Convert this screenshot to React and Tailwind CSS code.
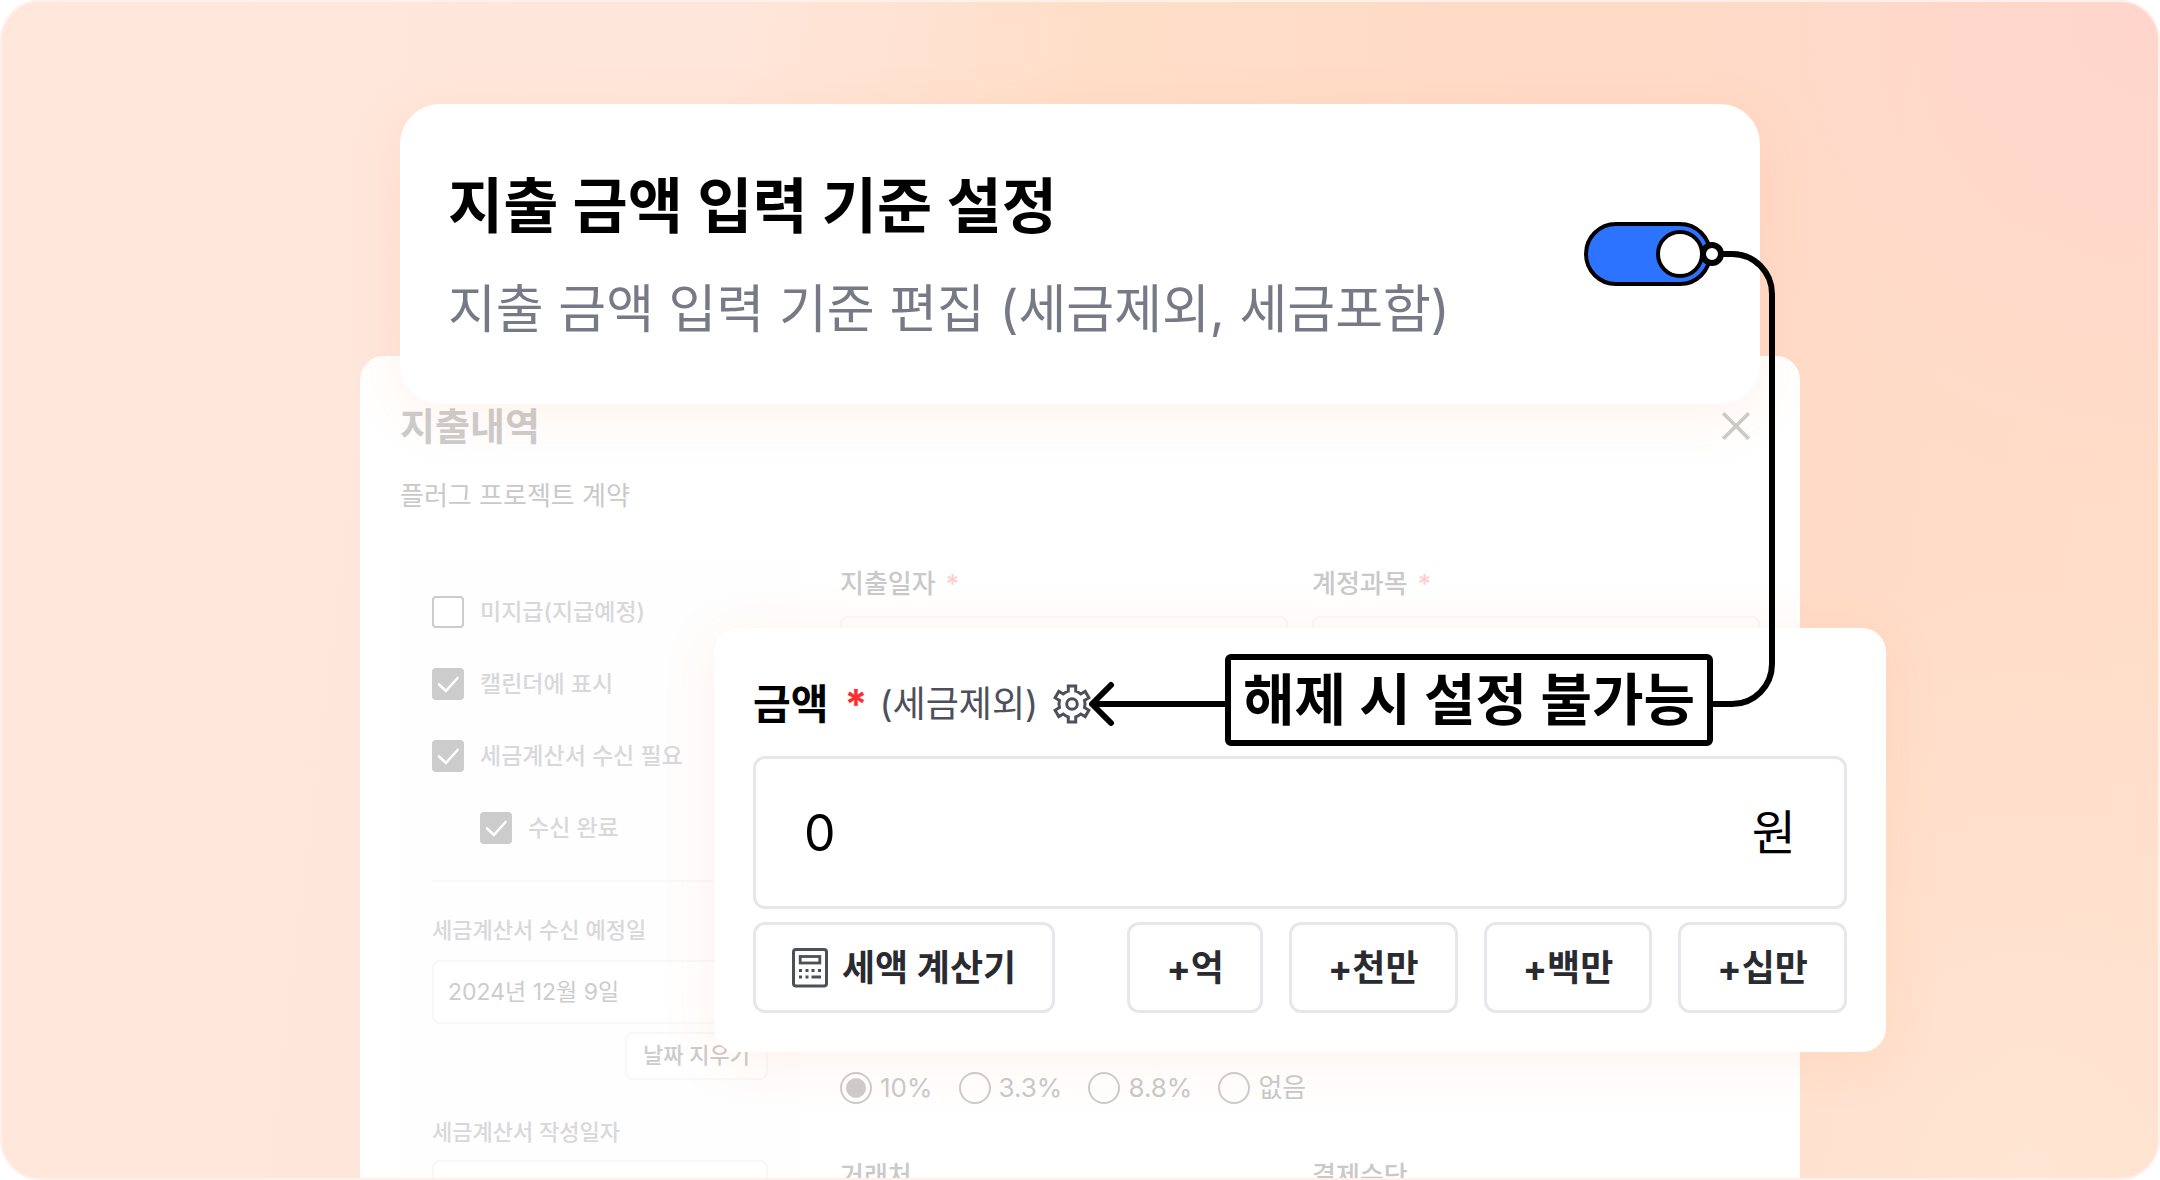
import React, { useState } from "react";

const sideChecks = [
  { id: "unpaid", label: "미지급(지급예정)", checked: false },
  { id: "calendar", label: "캘린더에 표시", checked: true },
  { id: "invoice", label: "세금계산서 수신 필요", checked: true },
  { id: "received", label: "수신 완료", checked: true, nested: true },
];

const taxRates = ["10%", "3.3%", "8.8%", "없음"];

const amountButtons = [
  { label: "+억", value: 100000000 },
  { label: "+천만", value: 10000000 },
  { label: "+백만", value: 1000000 },
  { label: "+십만", value: 100000 },
];

const CheckRow = ({ item }) => (
  <label
    htmlFor={item.id}
    className={`flex items-center gap-4 text-[23px] leading-8 font-medium text-[#d8d8da] ${
      item.nested ? "ml-12" : ""
    }`}
  >
    <span className="relative flex size-8">
      <input
        id={item.id}
        type="checkbox"
        defaultChecked={item.checked}
        className="peer size-8 appearance-none rounded border-2 border-[#cccccc] bg-white checked:bg-[#cccccc]"
      />
      <svg
        viewBox="0 0 32 32"
        fill="none"
        className="pointer-events-none absolute inset-0 hidden size-8 peer-checked:block"
      >
        <path
          d="M7 16.5 14 23 25.500 10"
          stroke="white"
          strokeWidth="2.6"
          strokeLinecap="round"
          strokeLinejoin="round"
        />
      </svg>
    </span>
    {item.label}
  </label>
);

const FieldLabel = ({ htmlFor, children, required }) => (
  <label
    htmlFor={htmlFor}
    className="flex gap-2.5 text-[26px] leading-9 font-medium text-[#c9c9c9]"
  >
    {children}
    {required && <span className="text-[#ffcccc]">*</span>}
  </label>
);

const GearIcon = () => (
  <svg viewBox="0 0 40 40" fill="none" className="size-10">
    <path
      d="M16.300 2H23.700V7.100A13.500 13.500 0 0 1 28.700 10L33.200 7.400 36.900 13.800 32.500 16.400A13.500 13.500 0 0 1 32.500 23.600L36.900 26.200 33.200 32.600 28.700 30A13.500 13.500 0 0 1 23.700 32.900V38H16.300V32.900A13.500 13.500 0 0 1 11.300 30L6.800 32.600 3.100 26.200 7.500 23.600A13.500 13.500 0 0 1 7.500 16.400L3.100 13.800 6.800 7.400 11.300 10A13.500 13.500 0 0 1 16.300 7.100Z"
      stroke="#4d505b"
      strokeWidth="3"
    />
    <circle cx="20" cy="20" r="5.300" stroke="#4d505b" strokeWidth="3" />
  </svg>
);

const CalculatorIcon = () => (
  <svg viewBox="0 0 36 40" fill="none" className="h-10 w-9">
    <rect x="1.500" y="1.500" width="33" height="36.500" rx="2.500" stroke="#4d505b" strokeWidth="3" />
    <rect x="8.200" y="8.500" width="19.600" height="6.500" stroke="#4d505b" strokeWidth="2.800" />
    <path
      d="M7 22.500h3M13.500 22.500h3M19.500 22.500h3M26 22.500h3M7 29h3M13.500 29h3M19.500 29H29"
      stroke="#4d505b"
      strokeWidth="3"
    />
  </svg>
);

const SettingCard = () => (
  <section className="relative z-10 mx-10 flex items-center justify-between rounded-[40px] bg-white pt-16 pr-12 pb-14 pl-12 shadow-[0_12px_56px_rgba(255,125,65,0.10)]">
    <div>
      <h1 className="text-[60px] leading-[76px] font-bold text-black">지출 금액 입력 기준 설정</h1>
      <p className="mt-7 text-[52px] leading-[76px] text-[#777a86]">
        지출 금액 입력 기준 편집 (세금제외, 세금포함)
      </p>
    </div>
    <button
      type="button"
      role="switch"
      aria-checked="true"
      aria-label="지출 금액 입력 기준 설정"
      className="mb-2 flex h-16 w-32 items-center justify-end rounded-full border-4 border-black bg-[#2c74ff] px-1"
    >
      <span className="size-12 rounded-full border-4 border-black bg-white" />
    </button>
  </section>
);

const ExpensePanel = () => (
  <section className="-mt-12 rounded-t-3xl bg-white px-10 pt-12">
    <div className="flex items-center justify-between pr-2">
      <h2 className="text-[38px] leading-11 font-bold text-[#cccccc]">지출내역</h2>
      <button type="button" aria-label="닫기">
        <svg viewBox="0 0 30 30" className="size-8" fill="none">
          <path d="M3 3 27 27M27 3 3 27" stroke="#cccccc" strokeWidth="3.500" />
        </svg>
      </button>
    </div>
    <p className="mt-7 text-[26px] leading-10 text-[#c9c9c9]">플러그 프로젝트 계약</p>

    <div className="mt-11 flex gap-10">
      <aside className="flex w-[400px] flex-col bg-[#fefefe] px-8 pt-9">
        <div className="flex flex-col gap-10 border-b-2 border-[#f8f8f9] pb-9">
          {sideChecks.map((item) => (
            <CheckRow key={item.id} item={item} />
          ))}
        </div>
        <label htmlFor="due" className="mt-8 text-[22px] leading-8 font-medium text-[#d8d8da]">
          세금계산서 수신 예정일
        </label>
        <input
          id="due"
          defaultValue="2024년 12월 9일"
          className="mt-3.5 h-16 rounded-lg border-2 border-[#f8f8f9] bg-white px-3.5 pb-1 text-[23px] text-[#cccccc]"
        />
        <button
          type="button"
          className="mt-2 h-12 self-end rounded-lg border-2 border-[#f8f8f9] bg-white px-4 pb-0.5 text-[22px] font-medium text-[#cccccc]"
        >
          날짜 지우기
        </button>
        <label htmlFor="written" className="mt-9 text-[22px] leading-8 font-medium text-[#d8d8da]">
          세금계산서 작성일자
        </label>
        <input
          id="written"
          className="mt-3 h-16 rounded-lg border-2 border-[#f8f8f9] bg-white px-3.5 text-[23px] text-[#cccccc]"
        />
      </aside>

      <div className="grid flex-1 grid-cols-2 content-start gap-x-6 pt-1.5">
        <div>
          <FieldLabel htmlFor="date" required>지출일자</FieldLabel>
          <input id="date" className="mt-3.5 h-20 w-full rounded-lg border-2 border-[#f8f8f9] px-4" />
        </div>
        <div>
          <FieldLabel htmlFor="account" required>계정과목</FieldLabel>
          <input id="account" className="mt-3.5 h-20 w-full rounded-lg border-2 border-[#f8f8f9] px-4" />
        </div>
        <fieldset className="col-span-2 mt-[376px] flex gap-[26px] text-[26px] leading-8 text-[#c9c9c9]">
          {taxRates.map((rate, index) => (
            <label key={rate} className="flex items-center gap-2">
              <input
                type="radio"
                name="tax"
                defaultChecked={index === 0}
                className="size-8 appearance-none rounded-full border-2 border-[#cccccc] bg-white bg-clip-content p-1 checked:bg-[#cccccc]"
              />
              {rate}
            </label>
          ))}
        </fieldset>
        <div className="mt-[54px]">
          <FieldLabel htmlFor="client">거래처</FieldLabel>
          <input id="client" className="mt-3.5 h-16 w-full rounded-lg border-2 border-[#f8f8f9] px-4" />
        </div>
        <div className="mt-[54px]">
          <FieldLabel htmlFor="method">결제수단</FieldLabel>
          <input id="method" className="mt-3.5 h-16 w-full rounded-lg border-2 border-[#f8f8f9] px-4" />
        </div>
      </div>
    </div>
  </section>
);

const AmountCard = () => {
  const [amount, setAmount] = useState(0);

  return (
    <section className="absolute top-[524px] -right-[86px] z-20 w-[1172px] rounded-3xl bg-white px-[39px] pt-12 pb-[39px] shadow-[0_8px_56px_rgba(255,125,65,0.10)]">
      <div className="flex h-14 items-center">
        <label htmlFor="amount" className="flex gap-4 text-[41px] leading-[56px] font-bold text-black">
          금액 <span className="text-[#ff2d2d]">*</span>
        </label>
        <span className="ml-3 text-[36px] leading-[56px] text-[#4d505b]">(세금제외)</span>
        <button type="button" aria-label="설정" className="ml-3.5">
          <GearIcon />
        </button>
      </div>
      <div className="mt-6 flex h-[153px] items-center rounded-xl border-[3px] border-[#e6e7ed] px-12 text-black">
        <input
          id="amount"
          value={amount}
          onChange={(e) => setAmount(Number(e.target.value) || 0)}
          className="min-w-0 flex-1 text-[50px] leading-[72px] outline-none"
        />
        <span className="text-[48px] leading-[72px]">원</span>
      </div>
      <div className="mt-[13px] flex gap-[26px] text-[36px] font-bold text-[#2a2b31]">
        <button
          type="button"
          className="mr-auto flex h-[91px] items-center gap-3.5 rounded-xl border-[3px] border-[#e6e7ed] px-9"
        >
          <CalculatorIcon />
          세액 계산기
        </button>
        {amountButtons.map((button) => (
          <button
            key={button.label}
            type="button"
            onClick={() => setAmount(amount + button.value)}
            className="h-[91px] rounded-xl border-[3px] border-[#e6e7ed] px-9"
          >
            {button.label}
          </button>
        ))}
      </div>
    </section>
  );
};

// Line from the switch down to the gear, with the note box sitting on it
const Callout = () => (
  <div className="pointer-events-none absolute top-[130px] right-0 z-30 h-[520px] w-[740px]">
    <svg viewBox="0 0 740 520" fill="none" className="absolute inset-0 size-full" stroke="black" strokeWidth="6">
      <path d="M661 20H672A40 40 0 0 1 712 60V430A40 40 0 0 1 672 470H34" />
      <path d="M51 451 32 470 51 489" strokeLinecap="round" strokeLinejoin="round" />
      <circle cx="652" cy="20" r="9" fill="white" />
    </svg>
    <p className="absolute top-[420px] right-[87px] w-[488px] rounded-md border-[6px] border-black bg-white text-center text-[56px] leading-[80px] font-bold text-black">
      해제 시 설정 불가능
    </p>
  </div>
);

const App = () => {
  return (
    <main className="h-screen overflow-hidden rounded-[40px] border-2 border-[#fff0ea] bg-[radial-gradient(circle_at_100%_2%,#ffd5cc_0%,#ffd5cc00_20%),radial-gradient(circle_at_94%_100%,#ffe5d3_0%,#ffe6d000_26%),linear-gradient(97deg,#ffe7dc_0%,#ffe6da_32%,#ffdec8_48%,#ffdac7_68%,#ffddc8_100%)] font-['Inter','Noto_Sans_CJK_KR',sans-serif]">
      <div className="relative mx-auto mt-[102px] w-full max-w-[1440px]">
        <SettingCard />
        <ExpensePanel />
        <AmountCard />
        <Callout />
      </div>
    </main>
  );
};

export default App;
